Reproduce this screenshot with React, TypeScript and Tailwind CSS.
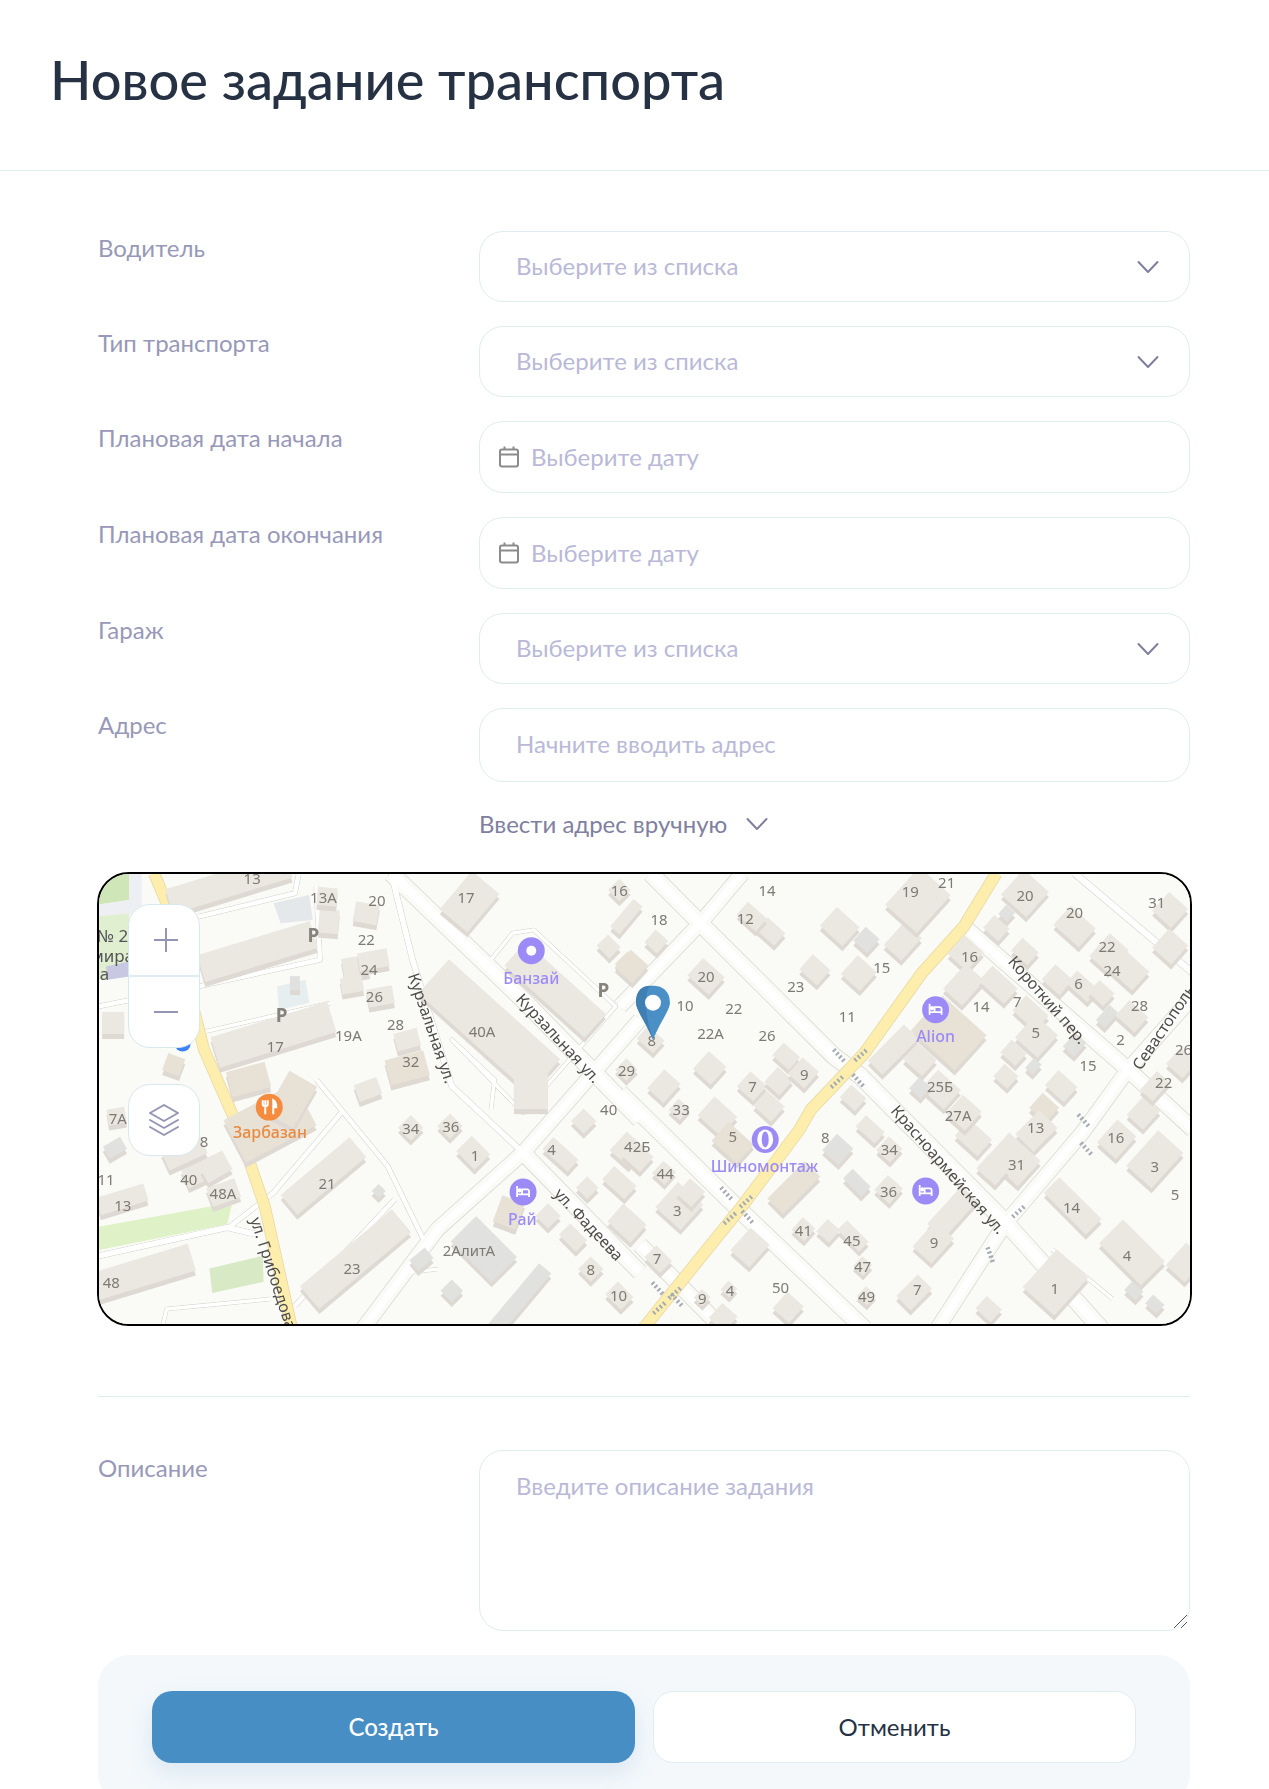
import React from "react";

type P = [number, number];
type Fn = (x: number, y: number) => P;
const a: Fn = (x, y) => [80 + x / 2.8, 860 + y / 3];
const b: Fn = (x, y) => [620 + x / 2.613, 860 + y / 3];
const pts = (f: Fn, l: number[]) => {
  const o: string[] = [];
  for (let i = 0; i < l.length; i += 2) o.push(f(l[i], l[i + 1]).join(","));
  return o.join(" ");
};

const roads: [Fn, number[], number][] = [
  [a, [870, 40, 1240, 420, 1568, 780], 9],
  [b, [0, 700, 320, 1060, 640, 1410], 9],
  [b, [80, 40, 210, 190, 560, 590, 630, 650, 1010, 1090, 1260, 1410], 9],
  [b, [900, 200, 1330, 630, 1500, 810], 8],
  [b, [320, 40, 210, 190, 0, 440], 7],
  [a, [1568, 480, 1240, 880, 1000, 1110, 790, 1410], 7],
  [b, [1500, 410, 1330, 630, 1210, 820, 1010, 1090, 830, 1410], 7],
  [a, [870, 40, 930, 300, 1040, 680, 1240, 880], 5],
  [a, [1240, 880, 1568, 1240], 8],
  [b, [52, 1157, 270, 1410], 8],
  [b, [1190, 40, 1500, 340], 6],
  [b, [1130, 1170, 1290, 1320], 3],
  [a, [50, 1190, 410, 1105, 490, 1125], 5],
  [a, [660, 660, 860, 920, 960, 1140], 4],
  [a, [420, 1100, 540, 1000, 730, 760], 4],
  [a, [600, 1340, 880, 1020], 4],
  [a, [50, 440, 330, 380, 670, 300, 660, 80], 4],
  [a, [330, 170, 600, 100, 610, 45], 4],
  [a, [230, 1395, 240, 1350, 530, 1320], 3],
  [a, [330, 520, 700, 430], 3],
  [a, [1150, 300, 1210, 220, 1270, 210, 1500, 440, 1240, 760, 1040, 540, 1160, 660, 1150, 750], 3],
  [a, [920, 1240, 1000, 1120, 960, 1190, 920, 1240, 1000, 1230], 3],
];

type Bd = [Fn, number, number, number, number, number, string?];
const T = "#ebe8e2", S = "#dedad3", G = "#e1e1df", E = "#e7e1d6";
const bld: Bd[] = [
  [a, 415, 70, 125, 26, -17], [a, 495, 275, 118, 28, -17], [a, 540, 525, 122, 32, -17], [a, 680, 950, 90, 26, -40], [a, 770, 1200, 120, 30, -40],
  [a, 170, 1240, 105, 28, -17], [a, 115, 1020, 50, 18, -17], [a, 350, 930, 46, 20, -25], [a, 530, 790, 80, 48, -28, E], [a, 470, 660, 40, 26, -15, E], [a, 590, 720, 32, 48, 30, E],
  [a, 1145, 500, 150, 46, 42], [a, 1262, 680, 34, 46, 0], [a, 1330, 390, 108, 32, 42], [a, 1090, 125, 36, 50, 40], [a, 800, 160, 24, 20, 10], [a, 695, 185, 20, 24, 5], [a, 690, 110, 20, 18, 5],
  [a, 770, 320, 26, 20, -10], [a, 820, 300, 30, 18, -10], [a, 760, 375, 22, 16, -10], [a, 840, 410, 26, 18, -10], [a, 915, 540, 24, 18, -15], [a, 915, 625, 40, 26, -15, E], [a, 805, 690, 24, 18, -20],
  [a, 925, 805, 18, 18, 45], [a, 1035, 800, 18, 18, 45], [a, 1100, 880, 26, 22, 45], [a, 260, 615, 18, 18, 20, E], [a, 95, 865, 20, 14, -30, G], [a, 100, 770, 18, 16, -10], [a, 290, 880, 42, 20, -25],
  [a, 380, 930, 28, 16, -30], [a, 400, 1000, 30, 20, -20], [a, 90, 490, 22, 22, 0], [a, 600, 370, 10, 14, 0, G], [a, 835, 995, 10, 10, 45, G], [a, 955, 1200, 20, 14, -40, G], [a, 1130, 1170, 58, 36, 45, G],
  [a, 1040, 1295, 16, 16, 45, G], [a, 1230, 1320, 80, 16, -50, G], [a, 1410, 785, 18, 18, 45], [a, 1345, 885, 34, 16, 42], [a, 1420, 985, 16, 16, 45], [a, 1510, 970, 30, 18, 42], [a, 1530, 1090, 30, 24, 42],
  [a, 1200, 1060, 24, 28, 20, E], [a, 1310, 1070, 18, 18, 45], [a, 1380, 1135, 24, 16, 45], [a, 1430, 1230, 18, 18, 45], [a, 1510, 1310, 22, 18, 45], [a, 1510, 90, 16, 16, 45], [a, 1530, 630, 16, 16, 45], [a, 1530, 170, 36, 12, -50], [a, 1480, 260, 18, 16, 45], [a, 1535, 315, 20, 18, 45, E],
  [b, 575, 200, 36, 30, 42], [b, 645, 240, 22, 22, 42, G], [b, 510, 330, 28, 24, 42], [b, 625, 340, 30, 30, 42], [b, 740, 245, 28, 36, 42], [b, 395, 215, 28, 20, 42], [b, 95, 245, 20, 20, 42], [b, 225, 350, 34, 28, 42], [b, 345, 170, 30, 20, 42], [b, 30, 320, 28, 28, 42, E],
  [b, 780, 120, 50, 60, 42], [b, 1060, 100, 40, 40, 42], [b, 1190, 200, 40, 30, 42], [b, 1060, 275, 26, 20, 42], [b, 985, 205, 24, 20, 42], [b, 1012, 160, 14, 14, 42, G], [b, 1280, 280, 30, 36, 42], [b, 1330, 330, 40, 30, 42], [b, 1440, 150, 30, 30, 42], [b, 905, 280, 30, 30, 42], [b, 900, 375, 30, 40, 42], [b, 990, 375, 40, 24, 42], [b, 1145, 360, 28, 24, 42], [b, 1210, 380, 34, 20, 42], [b, 1260, 400, 24, 20, 42],
  [b, 1275, 470, 14, 24, 42, G], [b, 1340, 470, 30, 24, 42], [b, 1075, 460, 36, 24, 42], [b, 1090, 530, 36, 36, 42], [b, 1190, 555, 18, 22, 42, G], [b, 1030, 580, 24, 20, 42], [b, 1010, 650, 22, 20, 42], [b, 1082, 620, 12, 16, 42, G], [b, 1440, 260, 30, 30, 42],
  [b, 860, 520, 70, 56, 42, E], [b, 715, 570, 60, 24, -45], [b, 785, 600, 30, 26, 42], [b, 840, 690, 36, 30, 42], [b, 785, 685, 18, 18, 42, G], [b, 925, 835, 36, 26, 42], [b, 900, 760, 30, 30, 42], [b, 1155, 680, 30, 24, 42], [b, 1110, 745, 26, 24, 42, E], [b, 1090, 815, 40, 30, -45], [b, 1030, 900, 50, 40, 42], [b, 975, 930, 30, 24, 42],
  [b, 1300, 840, 30, 36, 42], [b, 1400, 900, 40, 56, 42], [b, 1370, 760, 26, 30, 42], [b, 1185, 1040, 26, 70, -45], [b, 1340, 1180, 40, 70, -45], [b, 1140, 1270, 50, 60, 42], [b, 1345, 1295, 18, 14, 42, G], [b, 1400, 1335, 18, 14, 42, G], [b, 1480, 1210, 30, 36, 42], [b, 965, 1350, 24, 20, 42], [b, 1400, 680, 20, 30, 42], [b, 1470, 610, 26, 26, 42],
  [b, 235, 625, 28, 28, 42], [b, 115, 680, 26, 30, 42], [b, 345, 680, 26, 24, 42], [b, 415, 665, 24, 24, 42], [b, 390, 740, 28, 24, 42], [b, 435, 590, 26, 20, 42], [b, 480, 640, 26, 26, 42], [b, 255, 770, 36, 30, 42], [b, 295, 850, 40, 30, 42, E], [b, 155, 750, 18, 18, 42], [b, 20, 870, 30, 30, 42], [b, 45, 890, 30, 24, 42], [b, 115, 940, 20, 20, 42], [b, 155, 1040, 40, 40, 42], [b, 185, 1000, 24, 24, 42], [b, 25, 1100, 28, 28, 42],
  [b, 570, 870, 26, 26, 42, G], [b, 620, 970, 16, 30, -45, G], [b, 655, 810, 30, 18, 42], [b, 610, 715, 24, 20, 42], [b, 705, 870, 22, 22, 42], [b, 703, 990, 24, 24, 42], [b, 870, 1060, 26, 60, 42], [b, 820, 1150, 30, 40, 42], [b, 455, 985, 62, 26, -45, E], [b, 340, 1165, 30, 36, 42], [b, 480, 1110, 20, 20, 42], [b, 545, 1115, 20, 20, 42], [b, 610, 1130, 16, 36, -45], [b, 635, 1220, 16, 16, 42], [b, 100, 1200, 20, 26, -45], [b, 215, 1315, 14, 14, 42], [b, 285, 1290, 14, 14, 42], [b, 440, 1345, 26, 26, 42], [b, 645, 1310, 16, 16, 42], [b, 770, 1300, 36, 24, -45], [b, 270, 1375, 24, 24, 42], [b, 80, 540, 26, 20, 42],
];

const nums: [Fn, number, number, string][] = [
  [a,480,55,"13"],[a,680,110,"13А"],[a,830,120,"20"],[a,800,237,"22"],[a,808,327,"24"],[a,823,408,"26"],[a,882,492,"28"],[a,750,525,"19А"],[a,545,558,"17"],[a,925,605,"32"],[a,103,775,"7А"],[a,345,845,"8"],[a,925,805,"34"],[a,1037,800,"36"],[a,1105,888,"1"],[a,302,958,"40"],[a,398,1000,"48А"],[a,70,960,"11"],[a,117,1038,"13"],[a,690,970,"21"],[a,760,1228,"23"],[a,85,1268,"48"],[a,1088,1172,"2АлитА"],[a,1125,515,"40А"],[a,1080,110,"17"],[a,1510,90,"16"],[a,1530,632,"29"],[a,1480,750,"40"],[a,1320,868,"4"],[a,1430,1230,"8"],[a,1508,1308,"10"],
  [b,385,90,"14"],[b,760,92,"19"],[b,855,65,"21"],[b,1060,105,"20"],[b,1405,125,"31"],[b,102,178,"18"],[b,328,175,"12"],[b,1190,157,"20"],[b,1275,258,"22"],[b,915,288,"16"],[b,685,323,"15"],[b,1288,330,"24"],[b,1200,370,"6"],[b,225,348,"20"],[b,460,380,"23"],[b,1360,437,"28"],[b,945,440,"14"],[b,1040,425,"7"],[b,170,437,"10"],[b,298,445,"22"],[b,595,470,"11"],[b,1088,517,"5"],[b,237,520,"22А"],[b,385,525,"26"],[b,1310,538,"2"],[b,1225,617,"15"],[b,1475,568,"26"],[b,482,643,"9"],[b,1423,667,"22"],[b,347,680,"7"],[b,838,680,"25Б"],[b,885,767,"27А"],[b,160,750,"33"],[b,1088,802,"13"],[b,295,830,"5"],[b,1298,833,"16"],[b,537,833,"8"],[b,45,860,"42Б"],[b,705,870,"34"],[b,1038,915,"31"],[b,1400,920,"3"],[b,118,940,"44"],[b,703,995,"36"],[b,1453,1005,"5"],[b,1182,1043,"14"],[b,150,1053,"3"],[b,480,1112,"41"],[b,607,1142,"45"],[b,822,1147,"9"],[b,1327,1187,"4"],[b,97,1197,"7"],[b,635,1222,"47"],[b,420,1285,"50"],[b,288,1292,"4"],[b,215,1317,"9"],[b,778,1290,"7"],[b,645,1312,"49"],[b,1138,1287,"1"],[b,83,540,"8"],
];

const streets: [Fn, number, number, string, number, ("start" | "middle")?][] = [
  [a, 985, 505, "Курзальная ул.", 71],
  [a, 1340, 535, "Курзальная ул.", 47],
  [a, 1425, 1095, "ул. Фадеева", 47],
  [a, 490, 1075, "ул. Грибоедова", 72, "start"],
  [b, 860, 930, "Красноармейская ул.", 49],
  [b, 1120, 420, "Короткий пер.", 49],
  [b, 1350, 625, "Севастопольская", -56, "start"],
];

const crossings: [number, number, number][] = [
  [575, 590, 48], [632, 585, -42], [570, 665, -42], [625, 665, 48],
  [280, 1005, 48], [332, 1025, -42], [290, 1075, -42], [335, 1075, 48],
  [100, 1290, 48], [145, 1300, -42], [105, 1345, -42], [150, 1325, 48],
  [1215, 785, 48], [1222, 870, 48], [1045, 1055, -42], [970, 1190, 70],
];

const PURPLE = "#9c8af6";

function Bed({ c }: { c: P }) {
  return (
    <g transform={`translate(${c[0] - 7} ${c[1] - 6})`} fill="none" stroke="#fff" strokeWidth="1.8">
      <path d="M1 0V11M1 8.5H13V11M13 8.5V5.5Q13 3.5 11 3.5H6V8" />
      <circle cx="3.5" cy="4.5" r="1.2" fill="#fff" />
    </g>
  );
}

function MapArt() {
  const num = "#7d7a74";
  return (
    <svg viewBox="98 874 1093 451" className="block w-full h-full blur-[0.6px]" preserveAspectRatio="none">
      <rect x="98" y="874" width="1093" height="451" fill="#fafaf6" />
      <polygon points={pts(a, [40, 40, 135, 40, 135, 120, 40, 135])} fill="#cfe6b9" />
      <polygon points={pts(a, [135, 40, 170, 40, 170, 160, 40, 170, 40, 135, 135, 120])} fill="#eeeff2" />
      <polygon points={pts(a, [40, 170, 135, 160, 135, 350, 40, 360])} fill="#e0efcf" />
      <polygon points={pts(a, [70, 320, 135, 305, 135, 350, 75, 360])} fill="#c9c8e2" />
      <polygon points={pts(a, [40, 1105, 425, 1030, 410, 1095, 40, 1175])} fill="#dff1c7" />
      <polygon points={pts(a, [360, 1228, 510, 1190, 512, 1268, 368, 1302])} fill="#d8e9c6" />
      <polygon points={pts(a, [550, 380, 630, 360, 640, 430, 555, 450])} fill="#e6eef0" />
      <polygon points={pts(a, [540, 130, 640, 105, 650, 180, 560, 190])} fill="#e4e8ea" />
      {roads.map(([f, l, w], i) => (
        <polyline key={"s" + i} points={pts(f, l)} fill="none" stroke="#d8d8d2" strokeWidth={w >= 7 ? w + 9 : w + 1.5} strokeLinejoin="round" />
      ))}
      {roads.map(([f, l, w], i) => (
        <polyline key={"c" + i} points={pts(f, l)} fill="none" stroke={w >= 7 ? "#fafaf6" : "#ffffff"} strokeWidth={w >= 7 ? w + 7.5 : w} strokeLinejoin="round" />
      ))}
      {roads.map(([f, l, w], i) => (
        <polyline key={"r" + i} points={pts(f, l)} fill="none" stroke="#ffffff" strokeWidth={w} strokeLinejoin="round" />
      ))}
      <polyline points={pts(a, [205, 40, 240, 130, 345, 570, 435, 790, 515, 1040, 592, 1410])} fill="none" stroke="#e8d7a0" strokeWidth="12" />
      <polyline points={pts(a, [205, 40, 240, 130, 345, 570, 435, 790, 515, 1040, 592, 1410])} fill="none" stroke="#fdeeae" strokeWidth="10.5" />
      <polyline points={pts(b, [985, 40, 900, 200, 790, 340, 640, 580, 500, 750, 470, 810, 320, 1040, 130, 1310, 60, 1410])} fill="none" stroke="#e8d7a0" strokeWidth="12.5" />
      <polyline points={pts(b, [985, 40, 900, 200, 790, 340, 640, 580, 500, 750, 470, 810, 320, 1040, 130, 1310, 60, 1410])} fill="none" stroke="#fdeeae" strokeWidth="11" />
      {crossings.map(([x, y, r], i) => {
        const c = b(x, y);
        return (
          <line key={i} x1={c[0] - 9} y1={c[1]} x2={c[0] + 9} y2={c[1]} stroke="#a4abb5" strokeWidth="4.5" strokeDasharray="2 2.5" transform={`rotate(${r} ${c[0]} ${c[1]})`} />
        );
      })}
      {bld.map(([f, x, y, w0, h0, r, c], i) => {
        const k = f === b ? 0.85 : 1;
        const w = w0 * k, h = h0 * k;
        const p = f(x, y);
        const top = c ?? T;
        return (
          <g key={i} transform={`translate(${p[0]} ${p[1]}) rotate(${r})`}>
            <g transform={`rotate(${-r}) translate(0 5) rotate(${r})`}>
              <rect x={-w / 2} y={-h / 2} width={w} height={h} fill={S} />
            </g>
            <rect x={-w / 2} y={-h / 2} width={w} height={h} fill={top} />
          </g>
        );
      })}
      <g fontFamily="'Noto Sans', 'Open Sans', sans-serif" fontSize="15" fill={num} textAnchor="middle" dominantBaseline="central">
        {nums.map(([f, x, y, s], i) => {
          const p = f(x, y);
          return <text key={i} x={p[0]} y={p[1]}>{s}</text>;
        })}
        {([[652,225],[563,465],[1465,392]] as number[][]).map(([x, y], i) => {
          const p = a(x, y);
          return <text key={i} x={p[0]} y={p[1]} fontSize="19" fontWeight="700" fill="#86837d">P</text>;
        })}
        <g fill="#55555a" fontSize="17">
          <text x={a(88, 228)[0]} y={a(88, 228)[1]}>№ 2</text>
          <text x={a(88, 288)[0]} y={a(88, 288)[1]}>мира</text>
          <text x={a(66, 340)[0]} y={a(66, 340)[1]}>а</text>
        </g>
        <g fill="#4f4d4a" fontSize="16">
          {streets.map(([f, x, y, s, r, an], i) => {
            const p = f(x, y);
            return <text key={i} x={p[0]} y={p[1]} textAnchor={an ?? "middle"} transform={`rotate(${r} ${p[0]} ${p[1]})`}>{s}</text>;
          })}
        </g>
        <g fill={PURPLE} fontSize="16" fontWeight="500">
          <text x={a(1263, 355)[0]} y={a(1263, 355)[1]}>Банзай</text>
          <text x={a(1238, 1078)[0]} y={a(1238, 1078)[1]}>Рай</text>
          <text x={b(826, 530)[0]} y={b(826, 530)[1]}>Alion</text>
          <text x={b(378, 920)[0]} y={b(378, 920)[1]}>Шиномонтаж</text>
        </g>
        <text x={a(530, 818)[0]} y={a(530, 818)[1]} fill="#e98a3f" fontSize="16" fontWeight="500">Зарбазан</text>
      </g>
      <g fill={PURPLE}>
        <circle cx={a(1263, 273)[0]} cy={a(1263, 273)[1]} r="13.5" />
        <circle cx={a(1240, 998)[0]} cy={a(1240, 998)[1]} r="13.5" />
        <circle cx={b(826, 450)[0]} cy={b(826, 450)[1]} r="13.5" />
        <circle cx={b(380, 840)[0]} cy={b(380, 840)[1]} r="13.5" />
        <circle cx={b(800, 995)[0]} cy={b(800, 995)[1]} r="13.5" />
      </g>
      <circle cx={a(1263, 273)[0]} cy={a(1263, 273)[1]} r="5" fill="#fff" />
      <Bed c={a(1240, 998)} />
      <Bed c={b(826, 450)} />
      <Bed c={b(800, 995)} />
      <ellipse cx={b(380, 840)[0]} cy={b(380, 840)[1]} rx="8" ry="10" fill="#fff" />
      <ellipse cx={b(380, 840)[0]} cy={b(380, 840)[1]} rx="3.5" ry="8" fill={PURPLE} />
      <circle cx={a(528, 743)[0]} cy={a(528, 743)[1]} r="13.5" fill="#f58b3e" />
      <g transform={`translate(${a(528, 743)[0]} ${a(528, 743)[1]})`} stroke="#fff" strokeWidth="2" fill="none">
        <path d="M-4 -7V7M-6.5 -7V-3Q-6.5 -1 -4 -1Q-1.5 -1 -1.5 -3V-7" />
        <path d="M4 7V-7Q7 -5 7 0H4" fill="#fff" />
      </g>
      <circle cx={a(285, 552)[0]} cy={a(285, 552)[1]} r="8" fill="#3b82f6" />
      <g>
        <path d="M653 1040C645 1021 636 1010 636 1003C636 988 645 986 653 986C661 986 670 990 670 1003C670 1010 661 1021 653 1040Z" fill="#4a90c6" />
        <path d="M653 1040C645 1021 636 1010 636 1003C636 990 643 986 650 986C643 995 645 1015 653 1040Z" fill="#3f7fb2" />
        <circle cx="653" cy="1003" r="8" fill="#fff" />
      </g>
    </svg>
  );
}

function Chevron({ className }: { className: string }) {
  return (
    <svg viewBox="0 0 22 14" className={className} fill="none" stroke="#7f7f9e" strokeWidth="2" strokeLinecap="round" strokeLinejoin="round">
      <polyline points="1.5,2 11,12 20.5,2" />
    </svg>
  );
}

function Calendar() {
  return (
    <svg viewBox="0 0 20 22" className="w-5 h-[22px] shrink-0" fill="none" stroke="#8b8b8b" strokeWidth="2">
      <rect x="1" y="3.5" width="18" height="17" rx="2" />
      <path d="M1 8.5H19M5.5 0.5V4M14.5 0.5V4" />
    </svg>
  );
}

const LABEL = "text-[24px] leading-[36px] text-[#9898b8] -mt-px";
const BOX = "w-full rounded-[24px] border border-[#dfecf0] bg-white text-[24px] text-[#b9b9d7]";

function Row({ label, children }: { label: string; children: React.ReactNode }) {
  return (
    <div className="grid grid-cols-[381px_711px] mb-6">
      <div className={LABEL}>{label}</div>
      {children}
    </div>
  );
}

function Select() {
  return (
    <div className={`${BOX} h-[71px] flex items-center justify-between pl-[36px] pr-[30px]`}>
      <span className="-mt-px">Выберите из списка</span>
      <Chevron className="w-[22px] h-[14px]" />
    </div>
  );
}

function DateField() {
  return (
    <div className={`${BOX} h-[72px] flex items-center gap-[12px] pl-[19px]`}>
      <Calendar />
      <span>Выберите дату</span>
    </div>
  );
}

export default function App() {
  return (
    <div className="h-[1789px] overflow-hidden bg-white font-['Lato','Noto_Sans',sans-serif]">
      <header className="h-[171px] border-b border-[#dfecf0] flex items-center pl-[50px] pb-[10px]">
        <h1 className="text-[54.2px] leading-none font-medium text-[#263244]">Новое задание транспорта</h1>
      </header>
      <main className="pl-[98px] w-[1190px] pt-[60px]">
        <Row label="Водитель"><Select /></Row>
        <Row label="Тип транспорта"><Select /></Row>
        <Row label="Плановая дата начала"><DateField /></Row>
        <Row label="Плановая дата окончания"><DateField /></Row>
        <Row label="Гараж"><Select /></Row>
        <Row label="Адрес">
          <input readOnly placeholder="Начните вводить адрес" className={`${BOX} h-[74px] pl-[36px] pb-[4px] outline-none placeholder:text-[#b9b9d7]`} />
        </Row>
        <div className="ml-[381px] mt-[2px] h-[36px] flex items-center gap-[19px] text-[24px] text-[#8080a0]">
          <span>Ввести адрес вручную</span>
          <Chevron className="w-[22px] h-[14px]" />
        </div>
        <div className="relative mt-[30px] -ml-px w-[1095px] h-[454px] rounded-[32px] border-2 border-black overflow-hidden">
          <MapArt />
          <div className="absolute left-[29px] top-[30px] w-[72px] h-[144px] rounded-[22px] bg-white border border-[#d7e8ef] flex flex-col">
            <div className="h-[72px] flex items-center justify-center border-b-2 border-[#dfecf0] pl-1">
              <svg viewBox="0 0 24 24" className="w-6 h-6" stroke="#9494b4" strokeWidth="2"><path d="M12 0V24M0 12H24" /></svg>
            </div>
            <div className="flex-1 flex items-center justify-center pl-1">
              <svg viewBox="0 0 24 24" className="w-6 h-6" stroke="#9494b4" strokeWidth="2"><path d="M0 12H24" /></svg>
            </div>
          </div>
          <div className="absolute left-[29px] top-[210px] w-[72px] h-[72px] rounded-[22px] bg-white border border-[#d7e8ef] flex items-center justify-center">
            <svg viewBox="0 0 32 34" className="w-8 h-[34px]" fill="none" stroke="#9494b4" strokeWidth="2" strokeLinejoin="round" strokeLinecap="round">
              <path d="M16 2L30 10L16 18L2 10Z" />
              <path d="M2 17L16 25L30 17" />
              <path d="M2 24L16 32L30 24" />
            </svg>
          </div>
        </div>
        <div className="mt-[70px] border-t border-[#dfecf0]" />
        <div className="grid grid-cols-[381px_711px] mt-[53px]">
          <div className={`${LABEL} mt-0`}>Описание</div>
          <div className="relative">
            <textarea readOnly placeholder="Введите описание задания" className={`${BOX} h-[181px] block pl-[36px] pt-[17px] outline-none resize-none placeholder:text-[#b9b9d7]`} />
            <svg viewBox="0 0 13 13" className="absolute right-[3px] bottom-[3px] w-[13px] h-[13px]" stroke="#555" strokeWidth="1" fill="none">
              <path d="M0 13L13 0M7 13L13 7" />
            </svg>
          </div>
        </div>
        <div className="mt-6 rounded-[32px] bg-[#f4f8fb] h-[150px] pt-[36px] pl-[54px] pr-[54px] grid grid-cols-2 gap-[18px] items-start">
          <button className="h-[72px] rounded-[20px] bg-[#478ec5] text-white text-[24px] font-medium shadow-[0_10px_24px_rgba(71,142,197,0.15)]">Создать</button>
          <button className="h-[72px] rounded-[20px] bg-white border border-[#dfecf0] text-[#263244] text-[24px]">Отменить</button>
        </div>
      </main>
    </div>
  );
}
